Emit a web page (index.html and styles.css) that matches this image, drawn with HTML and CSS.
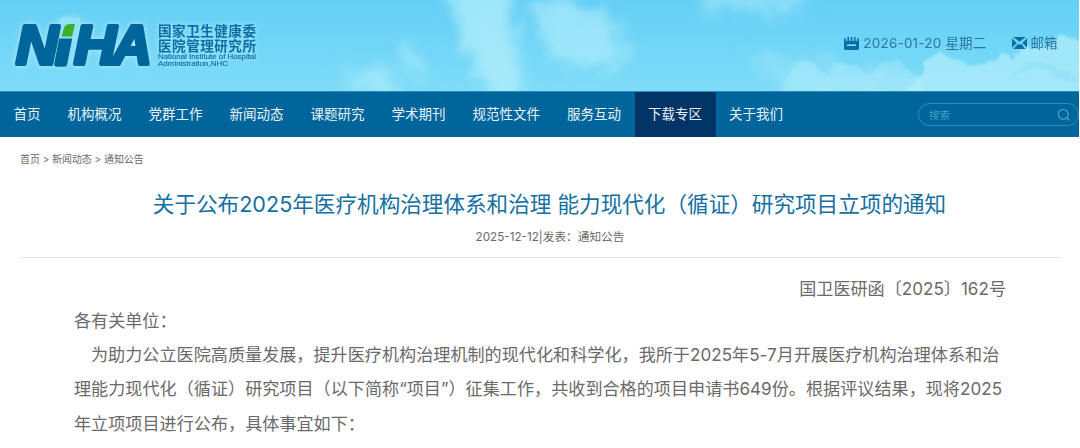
FILE: index.html
```
<!DOCTYPE html>
<html lang="zh-CN">
<head>
<meta charset="UTF-8">
<title>国家卫生健康委医院管理研究所</title>
<link rel="stylesheet" href="styles.css">
</head>

<body>
	<div id="container">

		<div class="header">
			<!-- 天空背景 -->
			<svg class="sky" width="1079" height="92" viewBox="0 0 1079 92">
				<defs>
					<filter id="cloud" x="-10%" y="-20%" width="120%" height="140%">
						<feTurbulence type="fractalNoise" baseFrequency="0.09" numOctaves="4" seed="4" result="n"/>
						<feDisplacementMap in="SourceGraphic" in2="n" scale="12" xChannelSelector="R" yChannelSelector="G"/>
						<feGaussianBlur stdDeviation="1"/>
					</filter>
					<filter id="mist" x="-20%" y="-30%" width="140%" height="160%">
						<feGaussianBlur stdDeviation="7" result="b"/>
						<feTurbulence type="fractalNoise" baseFrequency="0.05" numOctaves="5" seed="9" result="n"/>
						<feDisplacementMap in="b" in2="n" scale="26" xChannelSelector="R" yChannelSelector="G"/>
						<feGaussianBlur stdDeviation="2"/>
					</filter>
				</defs>
				<g fill="#b4eefb" filter="url(#mist)">
					<path opacity=".75" d="M446-20H508L512 20L518 45L526 110H498L476 66L460 38Z"/>
					<path opacity=".65" d="M530 12L556-6L580 10L614 10L612 34L630 54L606 66L566 66L545 46Z"/>
					<path opacity=".55" d="M398 40L416 48L432 78L408 76Z"/>
					<path opacity=".6" d="M335 64L350 74L387 64L398 100H370Z"/>
					<path opacity=".5" d="M700-16H820L790 16L745 10L705 12Z"/>
					<path opacity=".35" d="M745 50L800 58L860 70L920 80V100H800L770 80Z"/>
				</g>
				<g fill="#b4eefb" filter="url(#cloud)">
					<path opacity=".4" d="M780 96L792 70L804 60L816 66L824 74L838 62L858 66L870 74L884 62L900 60L912 72L930 96Z"/>
					<path opacity=".7" d="M896 100L918 78L930 58L940 52L952 58L966 62L984 66L998 56L1014 56L1026 46L1050 44L1062 36L1095 42V100Z"/>
				</g>
				<path d="M1004 86L1018 74L1032 68L1046 72L1062 80L1079 84V78L1050 64L1030 62L1012 74Z" fill="#7fdaf6" opacity=".35" filter="url(#cloud)"/>
			</svg>

			<svg class="logo" width="262" height="91" viewBox="0 0 262 91">
				<g class="brand">
					<text class="thick" x="56" y="63.500">i</text>
					<path d="M58 38.500L61 18H80L76 38.500Z" fill="#93e1f9"/>
					<text x="16" y="64" textLength="42" lengthAdjust="spacingAndGlyphs">N</text>
					<text x="74" y="64" textLength="42" lengthAdjust="spacingAndGlyphs">H</text>
					<text x="112" y="64">A</text>
				</g>
				<path d="M61.500 36.500L64 28Q65.500 24 70 24H75L72 36.500Z" fill="#3fae2a"/>
				<text class="brand-cn" x="158" y="35.500" textLength="98">国家卫生健康委</text>
				<text class="brand-cn" x="158" y="50.500" textLength="98">医院管理研究所</text>
				<text class="brand-en" x="158" y="58.500" textLength="98" lengthAdjust="spacingAndGlyphs">National Institute of Hospital</text>
				<text class="brand-en" x="158" y="65.500" textLength="70" lengthAdjust="spacingAndGlyphs">Administration,NHC</text>
			</svg>

			<div class="tools">
				<span class="date">
					<svg width="15" height="13" viewBox="0 0 15 13">
						<path d="M0 1.500H1.800V4H3.400V0H5V4H6.700V0H8.300V4H10V0H11.600V4H13.200V1.500H15V11.500Q15 13 13.500 13H1.500Q0 13 0 11.500Z" fill="#0b6ea5"/>
						<path d="M3 8.200H12" stroke="#8bdcf6" stroke-width="1.600"/>
					</svg>
					<b>2026-01-20 星期二</b>
				</span>
				<span class="mail">
					<svg width="15" height="12" viewBox="0 0 15 12">
						<path d="M1.500 0H13.500L7.500 4.500ZM0 1.500L4.500 6L0 10.500ZM15 1.500L10.500 6L15 10.500ZM1.500 12L6 7L7.500 8L9 7L13.500 12Z" fill="#0b6ea5" stroke="#0b6ea5" stroke-width=".3"/>
					</svg>
					邮箱
				</span>
			</div>
		</div>

		<div class="nav">
			<ul>
				<li>首页</li>
				<li>机构概况</li>
				<li>党群工作</li>
				<li>新闻动态</li>
				<li>课题研究</li>
				<li>学术期刊</li>
				<li>规范性文件</li>
				<li>服务互动</li>
				<li class="on">下载专区</li>
				<li>关于我们</li>
			</ul>
			<div class="search">
				<span>搜索</span>
				<svg width="14" height="14" viewBox="0 0 14 14" fill="none" stroke="#469fc9" stroke-width="1.400">
					<circle cx="6.300" cy="6.300" r="4.900"/>
					<path d="M9.800 9.800L12.500 12.500"/>
				</svg>
			</div>
		</div>

		<div class="position">首页 &gt; 新闻动态 &gt; 通知公告</div>

		<div class="content">
			<h1>关于公布2025年医疗机构治理体系和治理 能力现代化（循证）研究项目立项的通知</h1>
			<div class="info">2025-12-12|发表：通知公告</div>

			<div class="text">
				<p class="number">国卫医研函〔2025〕162号</p>
				<p>各有关单位：</p>
				<p class="indent">为助力公立医院高质量发展，提升医疗机构治理机制的现代化和科学化，我所于2025年5-7月开展医疗机构治理体系和治<br>理能力现代化（循证）研究项目（以下简称“项目”）征集工作，共收到合格的项目申请书649份。根据评议结果，现将2025<br>年立项项目进行公布，具体事宜如下：</p>
			</div>
		</div>

	</div>
</body>
</html>
```
FILE: styles.css
```
body {
	margin: 0;
	padding: 0;
	background: #fff;
	color: #6a6a6a;
	font-family: Inter, "Noto Sans CJK SC", sans-serif;
	overflow: hidden;
}

#container {
	width: 1079px;
	overflow: hidden;
}

ul, h1, p {
	margin: 0;
	padding: 0;
	font-weight: normal;
}

/* header */
.header {
	position: relative;
	display: flex;
	justify-content: space-between;
	height: 91px;
	background: linear-gradient(#64cff5, #7edcf8);
	overflow: hidden;
}

.sky {
	position: absolute;
	left: 0;
	top: 0;
}

.logo {
	position: relative;
	filter: drop-shadow(0 0 3px rgba(225, 248, 255, .6));
}

.brand text {
	font: italic bold 55px "Liberation Sans", sans-serif;
	fill: #00659b;
	stroke: #00659b;
	stroke-width: 4px;
	stroke-linejoin: round;
}

.brand .thick {
	stroke-width: 5.5px;
}

.brand-cn {
	font: bold 13.6px "Noto Sans CJK SC", sans-serif;
	fill: #0b6ea5;
}

.brand-en {
	font: 7px "Liberation Sans", sans-serif;
	fill: #0b6ea5;
	stroke: #0b6ea5;
	stroke-width: .15px;
}

.tools {
	position: relative;
	display: flex;
	gap: 25px;
	height: 20px;
	margin: 33px 21.5px 0 0;
	color: #2878a0;
	font-size: 13.5px;
	line-height: 20px;
}

.tools span {
	display: flex;
	align-items: center;
	gap: 4px;
}

.tools b {
	font-weight: normal;
	letter-spacing: .2px;
}

/* nav */
.nav {
	display: flex;
	justify-content: space-between;
	align-items: center;
	height: 46px;
	background: #00659b;
	border-top: 1px solid #2c8bb8;
	box-sizing: border-box;
	color: #e8f3f8;
}

.nav ul {
	display: flex;
	list-style: none;
}

.nav li {
	padding: 0 13.5px;
	font-size: 13.5px;
	line-height: 45px;
}

.nav li.on {
	background: #003366;
}

.search {
	display: flex;
	justify-content: space-between;
	align-items: center;
	width: 161px;
	height: 23px;
	padding: 0 7px 0 10px;
	box-sizing: border-box;
	border: 1px solid #2b8dbf;
	border-radius: 12px;
	color: #469fc9;
	font-size: 10.5px;
}

/* content */
.position {
	padding-left: 20px;
	margin-top: 12px;
	font-size: 9.95px;
	line-height: 20px;
}

.content {
	margin: 0 18px 0 20px;
}

.content h1 {
	padding-left: 18px;
	margin-top: 18px;
	color: #146fa2;
	font-size: 21.6px;
	line-height: 34px;
	text-align: center;
	white-space: nowrap;
}

.info {
	height: 36px;
	padding-left: 19px;
	border-bottom: 1px solid #e6e6e6;
	font-size: 11.7px;
	line-height: 32px;
	text-align: center;
}

.text {
	padding: 14px 55px 0 54px;
	font-size: 17.1px;
	line-height: 34.2px;
	white-space: nowrap;
}

.text .number {
	height: 32px;
	text-align: right;
}

.indent {
	letter-spacing: .02px;
	text-indent: 17px;
}
```
